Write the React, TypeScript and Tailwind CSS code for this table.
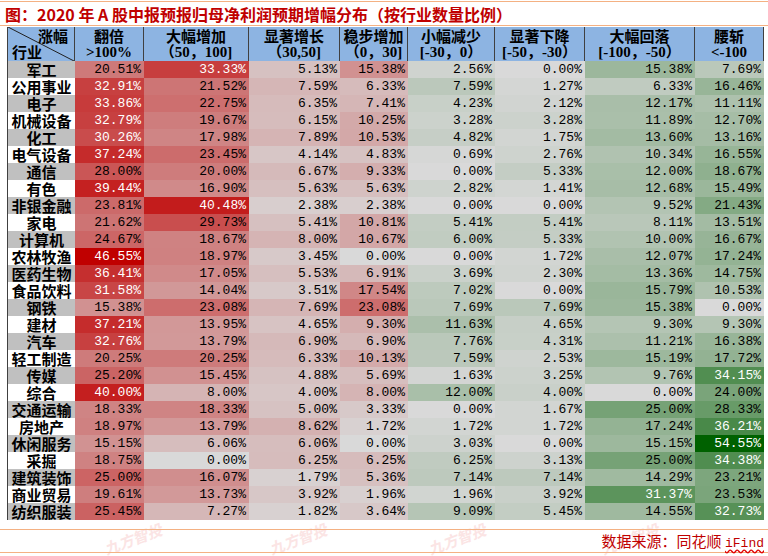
import React from "react";

type Row = [string, number, number, number, number, number, number, number, number];

const rows: Row[] = [
  ["军工", 20.51, 33.33, 5.13, 15.38, 2.56, 0.0, 15.38, 7.69],
  ["公用事业", 32.91, 21.52, 7.59, 6.33, 7.59, 1.27, 6.33, 16.46],
  ["电子", 33.86, 22.75, 6.35, 7.41, 4.23, 2.12, 12.17, 11.11],
  ["机械设备", 32.79, 19.67, 6.15, 10.25, 3.28, 3.28, 11.89, 12.7],
  ["化工", 30.26, 17.98, 7.89, 10.53, 4.82, 1.75, 13.6, 13.16],
  ["电气设备", 37.24, 23.45, 4.14, 4.83, 0.69, 2.76, 10.34, 16.55],
  ["通信", 28.0, 20.0, 6.67, 9.33, 0.0, 5.33, 12.0, 18.67],
  ["有色", 39.44, 16.9, 5.63, 5.63, 2.82, 1.41, 12.68, 15.49],
  ["非银金融", 23.81, 40.48, 2.38, 2.38, 0.0, 0.0, 9.52, 21.43],
  ["家电", 21.62, 29.73, 5.41, 10.81, 5.41, 5.41, 8.11, 13.51],
  ["计算机", 24.67, 18.67, 8.0, 10.67, 6.0, 5.33, 10.0, 16.67],
  ["农林牧渔", 46.55, 18.97, 3.45, 0.0, 0.0, 1.72, 12.07, 17.24],
  ["医药生物", 36.41, 17.05, 5.53, 6.91, 3.69, 2.3, 13.36, 14.75],
  ["食品饮料", 31.58, 14.04, 3.51, 17.54, 7.02, 0.0, 15.79, 10.53],
  ["钢铁", 15.38, 23.08, 7.69, 23.08, 7.69, 7.69, 15.38, 0.0],
  ["建材", 37.21, 13.95, 4.65, 9.3, 11.63, 4.65, 9.3, 9.3],
  ["汽车", 32.76, 13.79, 6.9, 6.9, 7.76, 4.31, 11.21, 16.38],
  ["轻工制造", 20.25, 20.25, 6.33, 10.13, 7.59, 2.53, 15.19, 17.72],
  ["传媒", 25.2, 15.45, 4.88, 5.69, 1.63, 3.25, 9.76, 34.15],
  ["综合", 40.0, 8.0, 4.0, 8.0, 12.0, 4.0, 0.0, 24.0],
  ["交通运输", 18.33, 18.33, 5.0, 3.33, 0.0, 1.67, 25.0, 28.33],
  ["房地产", 18.97, 13.79, 8.62, 1.72, 1.72, 1.72, 17.24, 36.21],
  ["休闲服务", 15.15, 6.06, 6.06, 0.0, 3.03, 0.0, 15.15, 54.55],
  ["采掘", 18.75, 0.0, 6.25, 6.25, 6.25, 3.13, 25.0, 34.38],
  ["建筑装饰", 25.0, 16.07, 1.79, 5.36, 7.14, 7.14, 14.29, 23.21],
  ["商业贸易", 19.61, 13.73, 3.92, 1.96, 1.96, 3.92, 31.37, 23.53],
  ["纺织服装", 25.45, 7.27, 1.82, 3.64, 9.09, 5.45, 14.55, 32.73],
];

const headers: [string, string][] = [
  ["翻倍", ">100%"],
  ["大幅增加", "（50，100]"],
  ["显著增长", "（30,50]"],
  ["稳步增加", "（0，30]"],
  ["小幅减少", "[-30，0）"],
  ["显著下降", "[-50，-30）"],
  ["大幅回落", "[-100，-50）"],
  ["腰斩", "<-100"],
];

function cellColor(v: number, col: number): string {
  if (col < 4) {
    const t = Math.min(1, v / 46.55);
    const r = Math.round(217 + (192 - 217) * t);
    const g = Math.round(217 * (1 - t));
    return `rgb(${r},${g},${g})`;
  }
  const t = Math.min(1, v / 54.55);
  const r = Math.round(217 * (1 - t));
  const g = Math.round(217 + (97 - 217) * t);
  return `rgb(${r},${g},${r})`;
}

const Watermark = ({ left }: { left: number }) => (
  <div
    className="absolute top-[530px] text-[15px] leading-[18px] font-bold italic text-[#fbe4e4] -rotate-[20deg] font-['Noto_Sans_CJK_SC',sans-serif] select-none"
    style={{ left }}
  >
    九方智投
  </div>
);

export default function App() {
  return (
    <div className="relative w-[768px] h-[556px] bg-white overflow-hidden font-['Noto_Sans_CJK_SC',sans-serif]">
      <Watermark left={103} />
      <Watermark left={268} />
      <Watermark left={427} />
      <Watermark left={600} />

      <div className="relative pt-[1px]">
        <div className="h-[25px] border-t border-b border-[#f4b183] flex items-center pl-[5px]">
          <span className="text-[16px] font-bold text-[#c00000] leading-none">
            图：2020 年 A 股中报预报归母净利润预期增幅分布（按行业数量比例）
          </span>
        </div>
      </div>

      <div className="relative mt-[1px] ml-[7px] border-l border-[#404040] w-[757px]">
        <div className="grid grid-cols-[67px_69px_105px_91px_68px_87px_90px_110px_69px]">
          <div className="relative h-[34px] bg-[#8db4e2] border-r border-[#404040] flex flex-col justify-between text-[15px] font-bold leading-[16px] text-black">
            <svg className="absolute inset-0" width="66" height="34" viewBox="0 0 66 34">
              <line x1="0" y1="0" x2="66" y2="34" stroke="#202020" strokeWidth="1" />
            </svg>
            <div className="relative text-right pr-[6px] pt-[1px]">涨幅</div>
            <div className="relative pl-[4px] pb-[1px]">行业</div>
          </div>
          {headers.map(([a, b], i) => (
            <div
              key={i}
              className="h-[34px] bg-[#8db4e2] border-r border-[#404040] flex flex-col items-center justify-center text-[15px] font-bold leading-[16px] text-black"
            >
              <div>{a}</div>
              <div className="font-['Liberation_Serif','Noto_Sans_CJK_SC',serif] whitespace-nowrap">{b}</div>
            </div>
          ))}

          {rows.map((row, ri) => (
            <React.Fragment key={ri}>
              <div
                className={`h-[17px] text-center text-[15px] font-bold leading-[17px] text-black ${
                  ri % 2 === 0 ? "bg-[#c0c0c0]" : "bg-white"
                }`}
              >
                {row[0]}
              </div>
              {row.slice(1).map((v, ci) => {
                const n = v as number;
                return (
                  <div
                    key={ci}
                    className={`h-[17px] text-right pr-[3px] text-[13px] leading-[17px] font-['Liberation_Mono',monospace] ${
                      n >= 30 ? "text-white" : "text-black"
                    }`}
                    style={{ backgroundColor: cellColor(n, ci) }}
                  >
                    {n.toFixed(2)}%
                  </div>
                );
              })}
            </React.Fragment>
          ))}
        </div>
      </div>

      <div className="relative mt-[9px] h-[24px] border-t border-b border-[#f4b183] flex items-center justify-end pr-[4px]">
        <span className="text-[15px] text-[#c00000] leading-none">
          数据来源：同花顺{" "}
          <span className="text-[13px] underline decoration-wavy decoration-[#e00000] underline-offset-2 font-['Liberation_Mono',monospace]">
            iFind
          </span>
        </span>
      </div>
    </div>
  );
}
